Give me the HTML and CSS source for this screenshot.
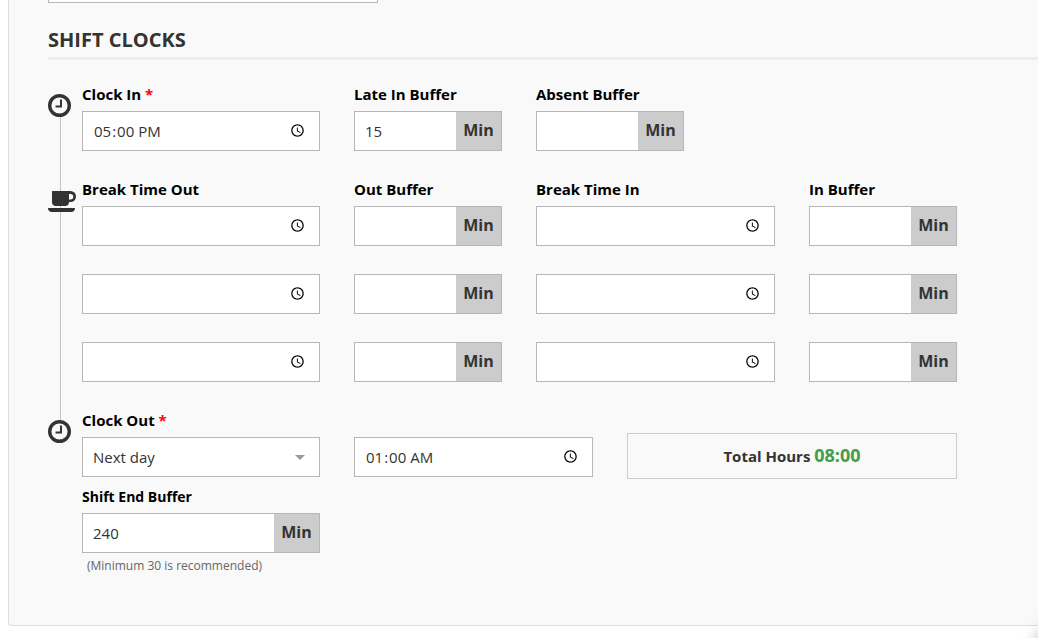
FILE: index.html
```html
<!DOCTYPE html>
<html lang="en-US">
<head>
<meta charset="utf-8">
<title>Shift Clocks</title>
<link rel="stylesheet" href="styles.css">
</head>
<body>
<main class="panel">
  <input class="control previous-field" type="text" aria-label="Shift name">
  <h2 class="section-title">SHIFT CLOCKS</h2>
  <form class="timeline">
    <section class="step step-first">
      <div class="rail">
        <svg class="icon-clock" viewBox="0 0 23 23" aria-hidden="true"><circle cx="11.5" cy="11.5" r="9.8"/><path d="M13 5.500v7H7.500"/></svg>
      </div>
      <div class="grid">
        <div class="field">
          <label for="clock-in">Clock In <span class="required">*</span></label>
          <input class="control time" id="clock-in" type="time" value="17:00">
        </div>
        <div class="field">
          <label for="late-in">Late In Buffer</label>
          <div class="group"><input class="control" id="late-in" type="text" value="15"><span class="unit">Min</span></div>
        </div>
        <div class="field">
          <label for="absent">Absent Buffer</label>
          <div class="group short"><input class="control" id="absent" type="text"><span class="unit">Min</span></div>
        </div>
      </div>
    </section>

    <section class="step">
      <div class="rail">
        <svg class="icon-cup" viewBox="0 0 28 21" aria-hidden="true"><path fill-rule="evenodd" d="M4.500 0H22.500a5.500 5.500 0 0 1 0 11H21a4 4 0 0 1-4 4H8a4 4 0 0 1-4-4V.5ZM21 3v5.500h1.500a2.750 2.750 0 0 0 0-5.500ZM0 17h27c0 2.500-1.500 4-4 4H4c-2.500 0-4-1.500-4-4Z"/></svg>
      </div>
      <div class="grid">
        <div class="field">
          <label for="out-1">Break Time Out</label>
          <input class="control time empty" id="out-1" type="time">
        </div>
        <div class="field">
          <label for="outbuf-1">Out Buffer</label>
          <div class="group"><input class="control" id="outbuf-1" type="text"><span class="unit">Min</span></div>
        </div>
        <div class="field">
          <label for="in-1">Break Time In</label>
          <input class="control time empty" id="in-1" type="time">
        </div>
        <div class="field">
          <label for="inbuf-1">In Buffer</label>
          <div class="group"><input class="control" id="inbuf-1" type="text"><span class="unit">Min</span></div>
        </div>
        <input class="control time empty" type="time" aria-label="Break Time Out 2">
        <div class="group"><input class="control" type="text" aria-label="Out Buffer 2"><span class="unit">Min</span></div>
        <input class="control time empty" type="time" aria-label="Break Time In 2">
        <div class="group"><input class="control" type="text" aria-label="In Buffer 2"><span class="unit">Min</span></div>
        <input class="control time empty" type="time" aria-label="Break Time Out 3">
        <div class="group"><input class="control" type="text" aria-label="Out Buffer 3"><span class="unit">Min</span></div>
        <input class="control time empty" type="time" aria-label="Break Time In 3">
        <div class="group"><input class="control" type="text" aria-label="In Buffer 3"><span class="unit">Min</span></div>
      </div>
    </section>

    <section class="step step-last">
      <div class="rail">
        <svg class="icon-clock" viewBox="0 0 23 23" aria-hidden="true"><circle cx="11.5" cy="11.5" r="9.8"/><path d="M13 5.500v7H7.500"/></svg>
      </div>
      <div class="grid grid-out">
        <div class="field">
          <label for="out-day">Clock Out <span class="required">*</span></label>
          <div class="select-wrap">
            <select class="control" id="out-day"><option>Same day</option><option selected>Next day</option></select>
          </div>
        </div>
        <input class="control time" type="time" value="01:00" aria-label="Clock out time">
        <div class="total"><span>Total Hours <output class="total-value">08:00</output></span></div>
        <div class="field">
          <label class="label-small" for="end-buffer">Shift End Buffer</label>
          <div class="group"><input class="control" id="end-buffer" type="text" value="240" aria-describedby="end-hint"><span class="unit">Min</span></div>
          <p class="hint" id="end-hint">(Minimum 30 is recommended)</p>
        </div>
      </div>
    </section>
  </form>
</main>
<div class="floating-widget" aria-hidden="true"></div>
</body>
</html>
```

FILE: styles.css
```css
* {
  box-sizing: border-box;
}

body {
  margin: 0;
  background: #fff;
  color: #333;
  font-family: "Open Sans", "Noto Sans", sans-serif;
  font-size: 15px;
  overflow: hidden;
}

.panel {
  margin-left: 8px;
  padding: 0 0 49px 39px;
  background: #f9f9f9;
  border: solid #ddd;
  border-width: 0 0 1px 1px;
  border-radius: 0 0 0 4px;
}

.control {
  display: block;
  width: 100%;
  min-width: 0;
  height: 40px;
  margin: 0;
  padding: 0 10px;
  border: 1px solid #b7b7b7;
  border-radius: 0;
  background: #fff;
  color: #333;
  font: inherit;
  outline: 0;
}

.time {
  padding-bottom: 1px;
}

.previous-field {
  width: 330px;
  height: 3px;
  border-top: 0;
}

.section-title {
  margin: 24px 0;
  padding-bottom: 4px;
  border-bottom: 3px solid #ededed;
  font-size: 20px;
  font-weight: 700;
  line-height: 26px;
}

.timeline {
  padding-right: 81px;
}

.step {
  display: grid;
  grid-template-columns: 34px minmax(0, 1fr);
}

.rail {
  padding-top: 10px;
  background: linear-gradient(#c4c4c4, #c4c4c4) 12px 0 / 1px 100% no-repeat;
}

.step-first .rail {
  background-position: 12px 20px;
}

.step-last .rail {
  background-size: 1px 20px;
}

.icon-clock,
.icon-cup {
  display: block;
}

.icon-clock {
  width: 23px;
  height: 23px;
  fill: #f9f9f9;
  stroke: #333;
  stroke-width: 3.4;
}

.icon-clock path {
  fill: none;
  stroke-width: 2;
}

.icon-cup {
  width: 28px;
  height: 21px;
  margin-top: 2px;
  fill: #333;
}

.grid {
  display: grid;
  grid-template-columns: 238fr 148fr 239fr 148fr;
  gap: 28px 34px;
  padding-bottom: 28px;
}

.grid-out {
  grid-template-columns: 238fr 239fr 330fr;
  align-items: end;
  row-gap: 10px;
  padding-bottom: 0;
}

.field {
  min-width: 0;
}

label {
  display: block;
  margin-bottom: 7px;
  color: #000;
  font-size: 15px;
  font-weight: 700;
  line-height: 20px;
}

.label-small {
  margin-bottom: 6px;
  font-size: 14px;
}

.required {
  color: #f00;
}

.group {
  display: flex;
}

.group .control {
  flex: 1;
  border-right: 0;
}

.short {
  width: 148px;
}

.unit {
  flex: none;
  width: 46px;
  height: 40px;
  border: 1px solid #b7b7b7;
  border-left: 0;
  background: #ccc;
  font-size: 16px;
  font-weight: 700;
  line-height: 36px;
  text-align: center;
}

.empty::-webkit-datetime-edit {
  opacity: 0;
}

.select-wrap {
  position: relative;
}

.select-wrap::after {
  content: "";
  position: absolute;
  top: 18px;
  right: 15px;
  border: 5px solid transparent;
  border-top-color: #999;
  border-bottom: 0;
  pointer-events: none;
}

select.control {
  appearance: none;
}

.total {
  display: flex;
  align-items: center;
  justify-content: center;
  height: 46px;
  margin-bottom: -2px;
  padding-bottom: 2px;
  border: 1px solid #ccc;
  font-weight: 700;
}

.total-value {
  color: #449d48;
  font-size: 18px;
}

.hint {
  margin: 3px 0 0 5px;
  color: #666;
  font-size: 12px;
  line-height: 20px;
}

.floating-widget {
  position: fixed;
  right: -62px;
  bottom: -50px;
  width: 60px;
  height: 60px;
  border-radius: 50%;
  box-shadow: 0 0 20px 4px rgba(0, 0, 0, 0.4);
}
```
